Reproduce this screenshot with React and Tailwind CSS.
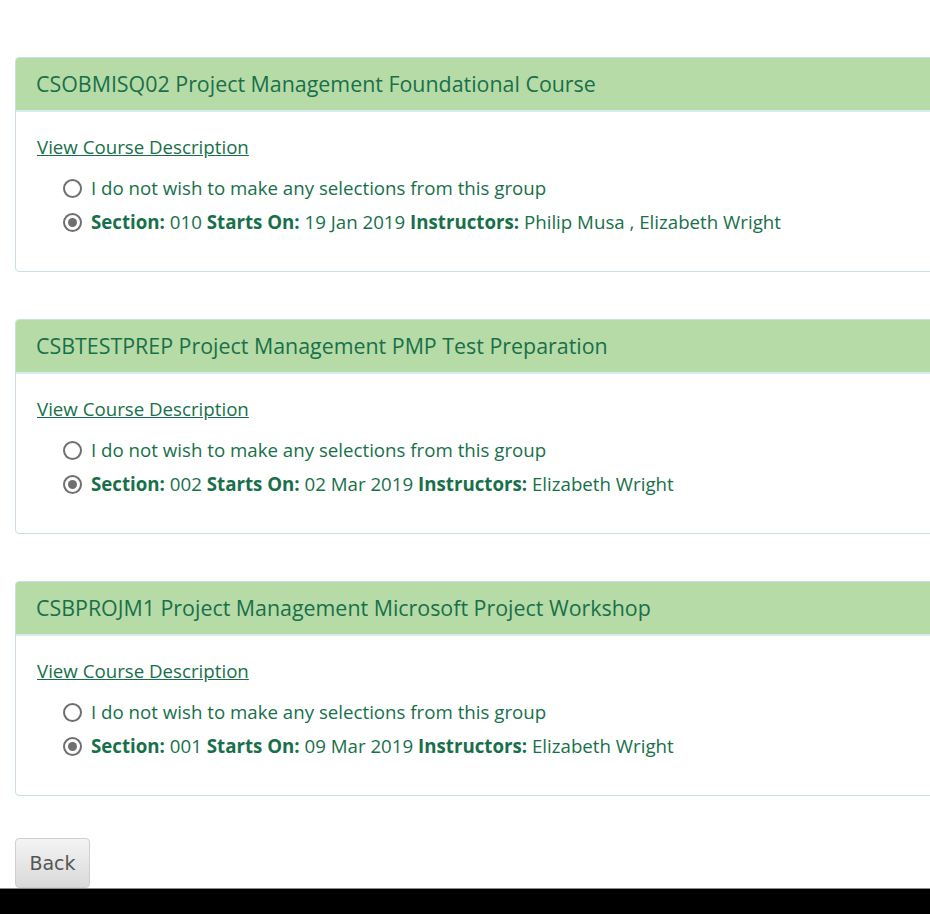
import React from "react";

const courses = [
  {
    title: "CSOBMISQ02 Project Management Foundational Course",
    section: "010",
    starts: "19 Jan 2019",
    instructors: "Philip Musa , Elizabeth Wright",
  },
  {
    title: "CSBTESTPREP Project Management PMP Test Preparation",
    section: "002",
    starts: "02 Mar 2019",
    instructors: "Elizabeth Wright",
  },
  {
    title: "CSBPROJM1 Project Management Microsoft Project Workshop",
    section: "001",
    starts: "09 Mar 2019",
    instructors: "Elizabeth Wright",
  },
];

function Radio({ checked }) {
  return (
    <span className="w-[19px] h-[19px] rounded-full border-2 border-[#6f6f6f] bg-white flex items-center justify-center shrink-0">
      {checked && <span className="w-[9px] h-[9px] rounded-full bg-[#6f6f6f]" />}
    </span>
  );
}

function CourseCard({ course }) {
  return (
    <div className="w-[960px] h-[215px] border border-[#c6e0e4] rounded-[4px] bg-white">
      {/* Header */}
      <div className="h-[54px] bg-[#b7dba6] rounded-t-[3px] border-b-2 border-[#d6ecee] flex items-center px-5 text-[21.4px] text-[#17704a]">
        {course.title}
      </div>
      {/* Body */}
      <div className="px-[21px] pt-[22px]">
        <a href="#" className="underline text-[18.7px] text-[#17704a] leading-[26px]">
          View Course Description
        </a>
        <div className="mt-[15px] pl-[26px] flex flex-col gap-[8px] text-[18.7px] text-[#17704a]">
          <label className="flex items-center gap-[9px] leading-[26px]">
            <Radio />
            <span>I do not wish to make any selections from this group</span>
          </label>
          <label className="flex items-center gap-[9px] leading-[26px]">
            <Radio checked />
            <span>
              <b>Section:</b> {course.section} <b>Starts On:</b> {course.starts}{" "}
              <b>Instructors:</b> {course.instructors}
            </span>
          </label>
        </div>
      </div>
    </div>
  );
}

export default function App() {
  return (
    <div className="w-[930px] h-[914px] overflow-hidden bg-white flex flex-col font-['Open_Sans',sans-serif]">
      <div className="pl-[15px] pt-[57px] flex flex-col gap-[47px]">
        {courses.map((c) => (
          <CourseCard key={c.title} course={c} />
        ))}
      </div>
      <div className="pl-[15px] pt-[42px]">
        <button className="w-[75px] h-[50px] rounded-[4px] border border-[#cfcfcf] bg-gradient-to-b from-[#f4f4f4] to-[#d9d9d9] text-[19px] text-[#555] font-['DejaVu_Sans',sans-serif]">
          Back
        </button>
      </div>
      <div className="mt-auto h-[26px] bg-black border-t border-[#888]" />
    </div>
  );
}
